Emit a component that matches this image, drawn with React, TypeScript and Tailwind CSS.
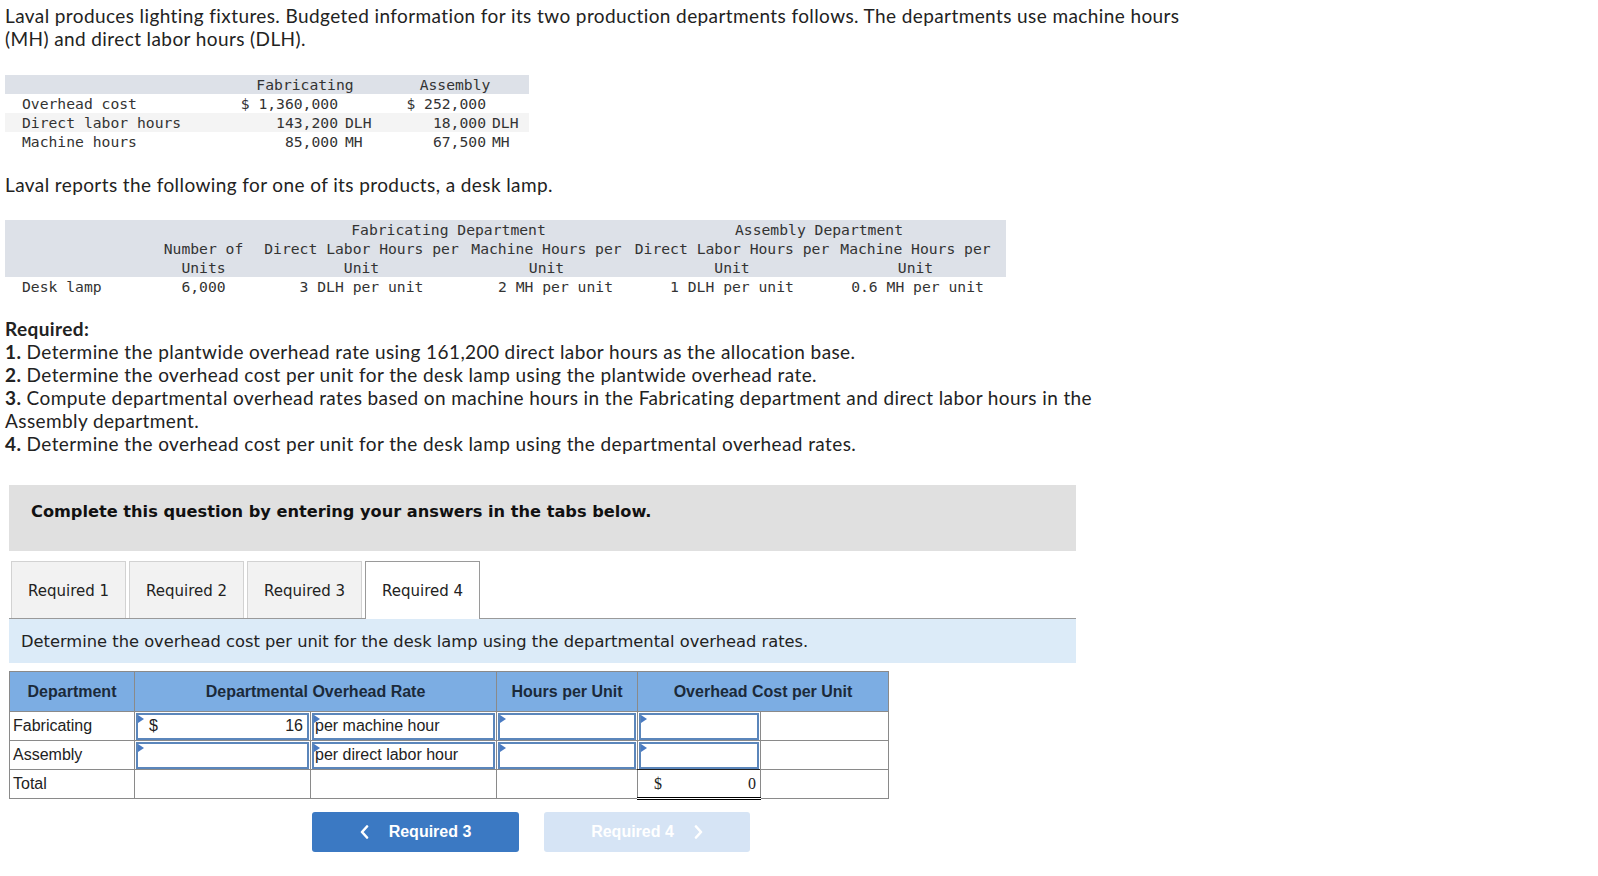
import React from "react";

const Tri = () => (
  <span className="absolute left-0 top-0 w-0 h-0 border-y-[4px] border-y-transparent border-l-[6px] border-l-[#4a7bc2]" />
);

const InputBox = ({ children }: { children?: React.ReactNode }) => (
  <div className="relative h-[27px] mx-[1px] border-2 border-[#5b86bb] bg-white flex items-center">
    <Tri />
    {children}
  </div>
);

export default function App() {
  const mono = "font-['DejaVu_Sans_Mono',monospace] text-[14.7px] leading-[19px] text-[#333]";
  const body = "text-[19px] leading-[23px] tracking-[0.4px]";
  return (
    <div className="min-h-screen bg-white px-[5px] pt-[4px] pb-[20px] font-['Lato',sans-serif] text-[#222]">
      <div className={body}>
        Laval produces lighting fixtures. Budgeted information for its two production departments follows. The departments use machine hours
        <br />
        (MH) and direct labor hours (DLH).
      </div>

      {/* Table 1 */}
      <div className={`mt-[25px] w-[524px] ${mono}`}>
        <div className="grid grid-cols-[230px_103px_52px_96px_43px] h-[19px] bg-[#dde1e8]">
          <div />
          <div className="col-span-2 flex justify-center pr-[15px] whitespace-nowrap">Fabricating</div>
          <div className="col-span-2 flex justify-center pr-[9px] whitespace-nowrap">Assembly</div>
        </div>
        <div className="grid grid-cols-[230px_103px_52px_96px_43px] h-[19px] whitespace-pre">
          <div className="pl-[17px]">Overhead cost</div>
          <div className="text-right">$ 1,360,000</div>
          <div />
          <div className="text-right">$ 252,000</div>
          <div />
        </div>
        <div className="grid grid-cols-[230px_103px_52px_96px_43px] h-[19px] bg-[#f4f4f4] whitespace-pre">
          <div className="pl-[17px]">Direct labor hours</div>
          <div className="text-right">143,200</div>
          <div className="pl-[7px]">DLH</div>
          <div className="text-right">18,000</div>
          <div className="pl-[6px]">DLH</div>
        </div>
        <div className="grid grid-cols-[230px_103px_52px_96px_43px] h-[19px] whitespace-pre">
          <div className="pl-[17px]">Machine hours</div>
          <div className="text-right">85,000</div>
          <div className="pl-[7px]">MH</div>
          <div className="text-right">67,500</div>
          <div className="pl-[6px]">MH</div>
        </div>
      </div>

      <div className={`mt-[22px] ${body}`}>Laval reports the following for one of its products, a desk lamp.</div>

      {/* Table 2 */}
      <div className={`mt-[24px] w-[1001px] ${mono}`}>
        <div className="bg-[#dde1e8]">
          <div className="grid grid-cols-[133px_131px_185px_185px_186px_181px] h-[19px] whitespace-nowrap">
            <div />
            <div />
            <div className="col-span-2 flex justify-center pr-[11px]">Fabricating Department</div>
            <div className="col-span-2 flex justify-center pr-[7px]">Assembly Department</div>
          </div>
          <div className="grid grid-cols-[133px_131px_185px_185px_186px_181px] h-[19px] whitespace-nowrap">
            <div />
            <div className="flex justify-center">Number of</div>
            <div className="flex justify-center">Direct Labor Hours per</div>
            <div className="flex justify-center">Machine Hours per</div>
            <div className="flex justify-center">Direct Labor Hours per</div>
            <div className="flex justify-center">Machine Hours per</div>
          </div>
          <div className="grid grid-cols-[133px_131px_185px_185px_186px_181px] h-[19px] whitespace-nowrap">
            <div />
            <div className="flex justify-center">Units</div>
            <div className="flex justify-center">Unit</div>
            <div className="flex justify-center">Unit</div>
            <div className="flex justify-center">Unit</div>
            <div className="flex justify-center">Unit</div>
          </div>
        </div>
        <div className="grid grid-cols-[133px_131px_185px_185px_186px_181px] h-[19px] whitespace-nowrap">
          <div className="pl-[17px]">Desk lamp</div>
          <div className="flex justify-center">6,000</div>
          <div className="flex justify-center">3 DLH per unit</div>
          <div className="flex justify-center pl-[18px]">2 MH per unit</div>
          <div className="flex justify-center">1 DLH per unit</div>
          <div className="flex justify-center pl-[4px]">0.6 MH per unit</div>
        </div>
      </div>

      {/* Required */}
      <div className={`mt-[21px] ${body}`}>
        <div className="font-bold">Required:</div>
        <div><span className="font-bold">1.</span> Determine the plantwide overhead rate using 161,200 direct labor hours as the allocation base.</div>
        <div><span className="font-bold">2.</span> Determine the overhead cost per unit for the desk lamp using the plantwide overhead rate.</div>
        <div>
          <span className="font-bold">3.</span> Compute departmental overhead rates based on machine hours in the Fabricating department and direct labor hours in the
          <br />
          Assembly department.
        </div>
        <div><span className="font-bold">4.</span> Determine the overhead cost per unit for the desk lamp using the departmental overhead rates.</div>
      </div>

      {/* Quiz area */}
      <div className="mt-[30px] ml-[4px] w-[1067px]">
        <div className="h-[66px] bg-[#e0e0e0] pl-[22px] pt-[17px] font-['DejaVu_Sans',sans-serif] font-bold text-[16.2px] leading-[20px] text-[#111]">
          Complete this question by entering your answers in the tabs below.
        </div>

        <div className="mt-[10px] flex items-end gap-[3px] pl-[2px] border-b border-[#9a9a9a] font-['DejaVu_Sans',sans-serif] text-[15px] text-[#222]">
          {["Required 1", "Required 2", "Required 3"].map((t) => (
            <div key={t} className="h-[57px] w-[115px] pt-[2px] border border-b-0 border-[#d2d2d2] bg-[#f2f2f2] flex items-center justify-center">
              {t}
            </div>
          ))}
          <div className="-mb-px h-[58px] w-[115px] pt-[2px] border border-b-0 border-[#9a9a9a] bg-white flex items-center justify-center">
            Required 4
          </div>
        </div>

        <div className="h-[44px] bg-[#dcebf8] pl-[12px] pt-[2px] flex items-center font-['DejaVu_Sans',sans-serif] text-[16.3px] text-[#222]">
          Determine the overhead cost per unit for the desk lamp using the departmental overhead rates.
        </div>

        <table className="mt-[8px] border-collapse table-fixed w-[879px] font-['Liberation_Sans',Arial,sans-serif] text-[16px] text-[#222]">
          <colgroup>
            <col className="w-[125px]" />
            <col className="w-[176px]" />
            <col className="w-[186px]" />
            <col className="w-[141px]" />
            <col className="w-[123px]" />
            <col className="w-[128px]" />
          </colgroup>
          <thead>
            <tr className="h-[40px] bg-[#7cade3] text-[#1b2a3a] font-bold">
              <th className="border border-[#8a8a8a] font-bold">Department</th>
              <th colSpan={2} className="border border-[#8a8a8a] font-bold">Departmental Overhead Rate</th>
              <th className="border border-[#8a8a8a] font-bold">Hours per Unit</th>
              <th colSpan={2} className="border border-[#8a8a8a] font-bold">Overhead Cost per Unit</th>
            </tr>
          </thead>
          <tbody>
            <tr className="h-[29px]">
              <td className="border border-[#8a8a8a] pl-[3px] p-0">Fabricating</td>
              <td className="border border-[#8a8a8a] p-0">
                <InputBox>
                  <span className="pl-[11px]">$</span>
                  <span className="ml-auto pr-[4px]">16</span>
                </InputBox>
              </td>
              <td className="border border-[#8a8a8a] p-0">
                <InputBox>
                  <span className="pl-[1px]">per machine hour</span>
                </InputBox>
              </td>
              <td className="border border-[#8a8a8a] p-0"><InputBox /></td>
              <td className="border border-[#8a8a8a] p-0"><InputBox /></td>
              <td className="border border-[#8a8a8a] p-0" />
            </tr>
            <tr className="h-[29px]">
              <td className="border border-[#8a8a8a] pl-[3px] p-0">Assembly</td>
              <td className="border border-[#8a8a8a] p-0"><InputBox /></td>
              <td className="border border-[#8a8a8a] p-0">
                <InputBox>
                  <span className="pl-[1px]">per direct labor hour</span>
                </InputBox>
              </td>
              <td className="border border-[#8a8a8a] p-0"><InputBox /></td>
              <td className="border border-[#8a8a8a] p-0"><InputBox /></td>
              <td className="border border-[#8a8a8a] p-0" />
            </tr>
            <tr className="h-[29px]">
              <td className="border border-[#8a8a8a] pl-[3px] p-0">Total</td>
              <td className="border border-[#8a8a8a] p-0" />
              <td className="border border-[#8a8a8a] p-0" />
              <td className="border border-[#8a8a8a] p-0" />
              <td className="border border-[#8a8a8a] border-t-[#222] border-b-[3px] border-b-black border-double p-0">
                <div className="flex items-center font-['Liberation_Serif',serif] text-[16px]">
                  <span className="pl-[16px]">$</span>
                  <span className="ml-auto pr-[4px]">0</span>
                </div>
              </td>
              <td className="border border-[#8a8a8a] p-0" />
            </tr>
          </tbody>
        </table>

        <div className="mt-[12px] flex font-['Liberation_Sans',Arial,sans-serif] font-bold text-[16px] text-white">
          <div className="ml-[303px] w-[207px] h-[40px] rounded-[3px] bg-[#3b79c3] flex items-center justify-center gap-[20px]">
            <svg width="9" height="14" viewBox="0 0 9 14" fill="none">
              <path d="M7 1.5 L2 7 L7 12.5" stroke="white" strokeWidth="2.6" strokeLinecap="round" strokeLinejoin="round" />
            </svg>
            <span>Required 3</span>
          </div>
          <div className="ml-[25px] w-[206px] h-[40px] rounded-[3px] bg-[#d6e4f5] flex items-center justify-center gap-[20px]">
            <span>Required 4</span>
            <svg width="9" height="14" viewBox="0 0 9 14" fill="none">
              <path d="M2 1.5 L7 7 L2 12.5" stroke="white" strokeWidth="2.6" strokeLinecap="round" strokeLinejoin="round" />
            </svg>
          </div>
        </div>
      </div>
    </div>
  );
}
